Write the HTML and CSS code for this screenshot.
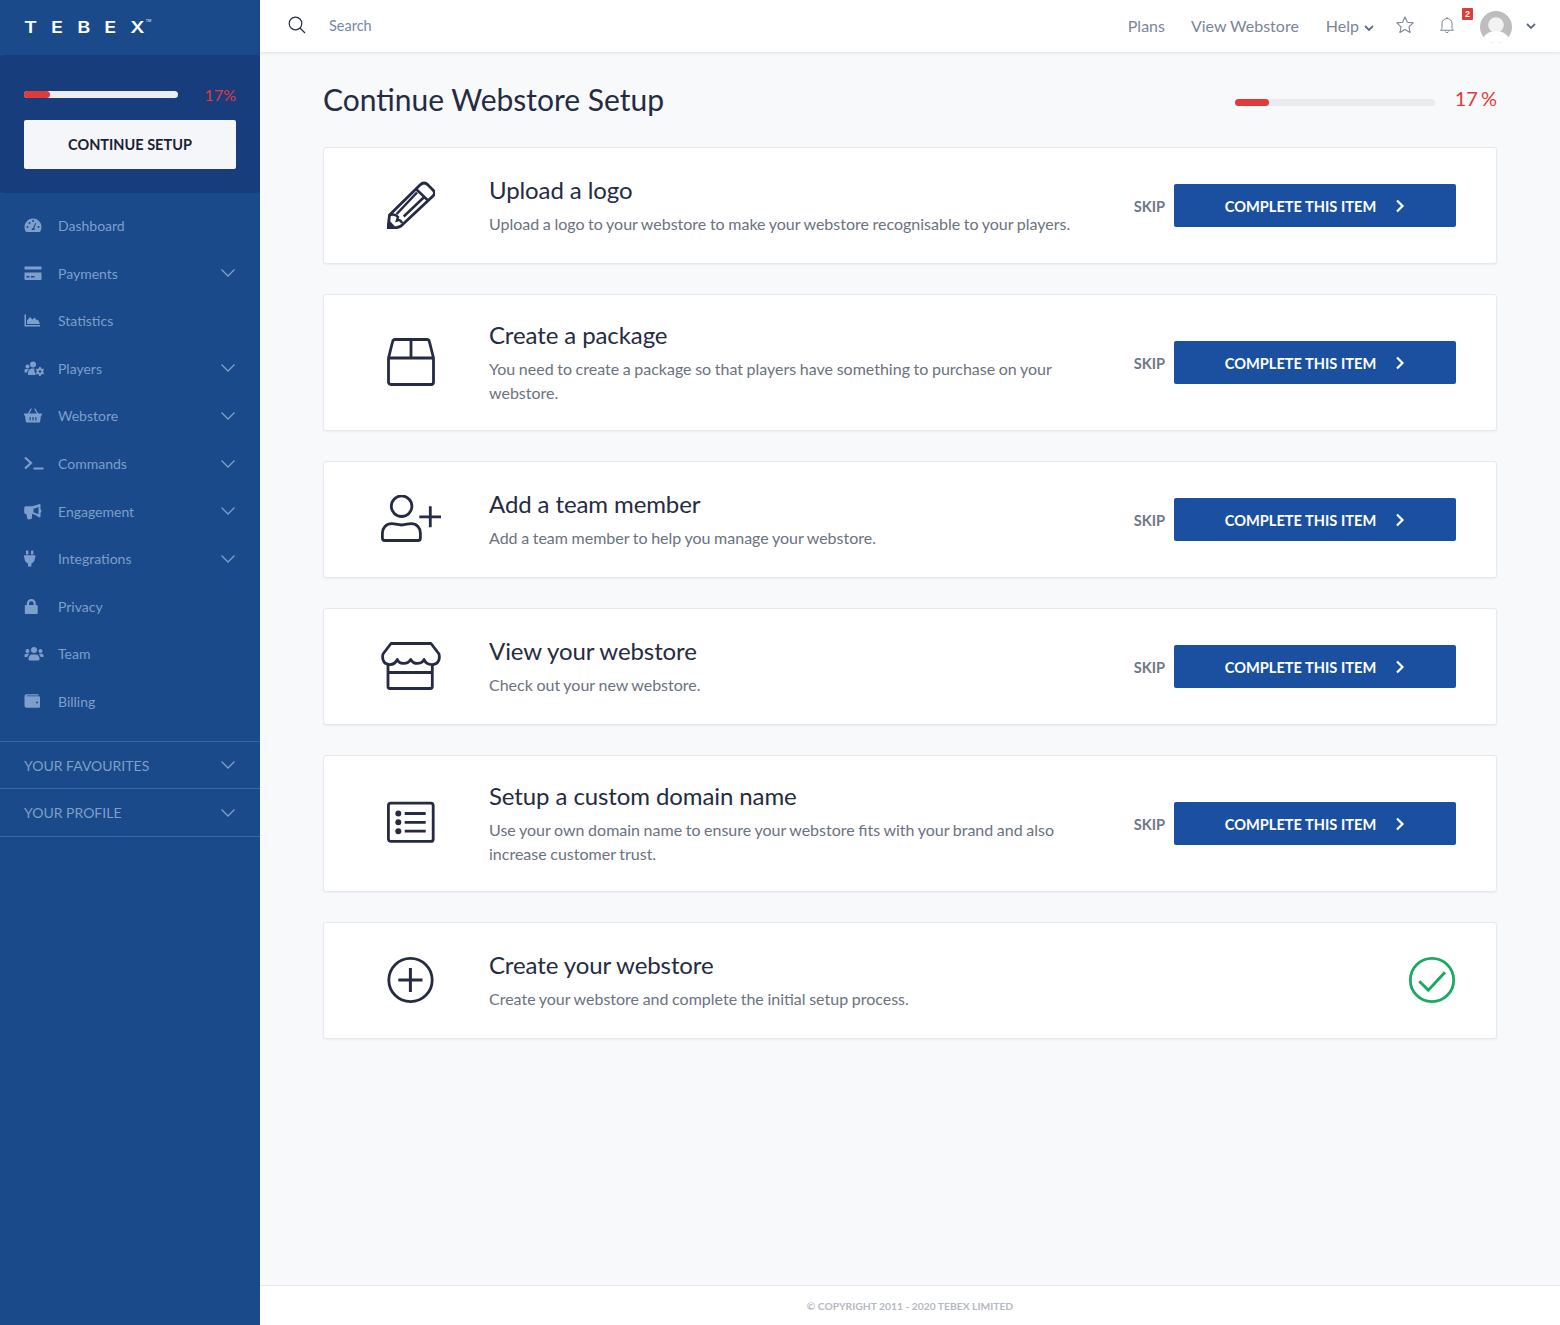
FILE: index.html
```html
<!DOCTYPE html>
<html lang="en">
<head>
    <meta charset="UTF-8">
    <title>Continue Webstore Setup</title>
    <link rel="stylesheet" href="styles.css">
</head>
<body>
    <svg class="sprites" width="0" height="0">
        <symbol id="chev" viewBox="0 0 16 10"><path d="M1.5 1.5 8 8l6.500-6.500" fill="none" stroke="currentColor" stroke-width="1.300"/></symbol>
        <symbol id="chev-small" viewBox="0 0 10 7"><path d="M1 1l4 4 4-4" fill="none" stroke="currentColor" stroke-width="1.800"/></symbol>
        <symbol id="chev-right" viewBox="0 0 10 14"><path d="M2 1.500 7.500 7 2 12.500" fill="none" stroke="currentColor" stroke-width="2.200"/></symbol>
    </svg>
    <aside class="sidebar">
        <div class="logo"><span class="logo-text">TEBE<span class="logo-end">X</span><sup>TM</sup></span></div>
        <div class="setup-box">
            <div class="setup-progress">
                <div class="side-bar-track"><div class="side-bar-fill"></div></div>
                <span class="side-percent">17%</span>
            </div>
            <a class="continue-btn">CONTINUE SETUP</a>
        </div>
        <nav class="side-nav">
            <a class="nav-item">
                <svg class="nav-icon" viewBox="0 0 18 16"><path fill-rule="evenodd" d="M9 1a8.500 8.500 0 0 0-8.500 8.500c0 1.700.4 3.200 1.200 4.500.2.300.5.500.9.500h12.800c.4 0 .7-.2.900-.5.800-1.300 1.200-2.800 1.200-4.500A8.500 8.500 0 0 0 9 1zM3.500 10.500a1 1 0 1 1 0-2 1 1 0 0 1 0 2zm2-4a1 1 0 1 1 0-2 1 1 0 0 1 0 2zM9 4.500a1 1 0 1 1 0-2 1 1 0 0 1 0 2zm1.500 8H7.700a1.700 1.700 0 0 1 1.500-2.100l2-5 1 .4-2 5c.5.400.7 1.100.3 1.700zm4-2a1 1 0 1 1 0-2 1 1 0 0 1 0 2z"/></svg>
                <span>Dashboard</span>
            </a>
            <a class="nav-item">
                <svg class="nav-icon" viewBox="0 0 18 16"><path fill-rule="evenodd" d="M1 1h16c.3 0 .5.200.5.500V4H.5V1.500C.5 1.200.7 1 1 1zM.5 7h17v7c0 .3-.2.500-.5.500H1c-.3 0-.5-.2-.5-.5V7zm2 3.500V12h3v-1.500h-3zm4.500 0V12h3.500v-1.500H7z"/></svg>
                <span>Payments</span>
                <svg class="nav-chev"><use href="#chev"/></svg>
            </a>
            <a class="nav-item">
                <svg class="nav-icon" viewBox="0 0 18 16"><path d="M.5 2H2v10.500h14V14H.5V2zM3 11.500V8l3-3.500L8.500 7l2-2 2.500 3 1-1 2 4.500H3z"/></svg>
                <span>Statistics</span>
            </a>
            <a class="nav-item">
                <svg class="nav-icon nav-icon-wide" viewBox="0 0 20 16"><circle cx="3.500" cy="6" r="2"/><circle cx="9" cy="4" r="3"/><path d="M.5 12V10c0-1 .8-1.500 1.500-1.500h2c.3 0 .6.100.9.300A4.500 4.500 0 0 0 3 12H.5zM4 14v-1.500C4 10 6 8 8 8h2.500c-.5 1.500 0 3.500 1 5 0 .5 0 1 .2 1.500H4.500c-.3 0-.5-.2-.5-.5z"/><path fill-rule="evenodd" d="M15.200 6.500l1.500.1.300 1.200 1.200.7 1.200-.4.700 1.300-.9.900v1.400l.9.900-.7 1.300-1.200-.4-1.200.7-.3 1.200h-1.500l-.3-1.200-1.200-.7-1.200.4-.7-1.300.9-.9V10.300l-.9-.9.700-1.300 1.200.4 1.200-.7.300-1.700zM16 9.700a1.300 1.300 0 1 0 0 2.600 1.300 1.300 0 0 0 0-2.600z"/></svg>
                <span>Players</span>
                <svg class="nav-chev"><use href="#chev"/></svg>
            </a>
            <a class="nav-item">
                <svg class="nav-icon" viewBox="0 0 18 16"><path fill-rule="evenodd" d="M6.800.8l1 .6L5.200 6h7.600L10.200 1.400l1-.6L14.200 6h3.300c.3 0 .5.200.5.500v1c0 .3-.2.500-.5.500H17l-.9 6.200c-.1.500-.5.800-1 .8H2.900c-.5 0-.9-.3-1-.8L1 8H.5C.2 8 0 7.800 0 7.500v-1C0 6.200.2 6 .5 6h3.300L6.800.8zM5.500 9.500v3.500h1.200V9.500H5.500zm2.900 0v3.500h1.200V9.500H8.400zm2.900 0v3.500h1.200V9.500h-1.200z"/></svg>
                <span>Webstore</span>
                <svg class="nav-chev"><use href="#chev"/></svg>
            </a>
            <a class="nav-item">
                <svg class="nav-icon nav-icon-wide" viewBox="0 0 20 16"><path d="M1 2l6 5.500L1 13" fill="none" stroke="currentColor" stroke-width="2.200"/><rect x="9.500" y="12" width="10" height="2"/></svg>
                <span>Commands</span>
                <svg class="nav-chev"><use href="#chev"/></svg>
            </a>
            <a class="nav-item">
                <svg class="nav-icon" viewBox="0 0 18 16"><path fill-rule="evenodd" d="M15.500.5c.6 0 1 .5 1 1v4.300c.6.300 1 .9 1 1.700s-.4 1.400-1 1.700V13c0 .6-.5 1-1 1-.3 0-.5-.1-.7-.2-1.800-1.500-4-3-6.800-3.300v3.700c0 .5-.2 1-.7 1.200l-2.800.6c-.6.100-1-.3-1.200-.7l-1-4.800H2c-1 0-1.800-.8-1.800-1.800V4.500c0-1 .8-1.800 1.800-1.800h6C10.800 2.500 13 1.400 14.800.8c.2-.2.400-.3.700-.3zM14.500 3.200c-1.400 1-3.300 1.700-5 1.900v3.800c1.700.2 3.600 1 5 1.900V3.200z"/></svg>
                <span>Engagement</span>
                <svg class="nav-chev"><use href="#chev"/></svg>
            </a>
            <a class="nav-item">
                <svg class="nav-icon" viewBox="0 0 18 16"><path d="M2.500 0h1.400c.3 0 .5.200.5.500V4H2V.5c0-.3.200-.5.500-.5zm5 0h1.400c.3 0 .5.200.5.500V4H7V.5c0-.3.200-.5.500-.5zM.5 4.800h10.400c.3 0 .5.200.5.500v1.500c0 .3-.2.500-.5.500v.7c0 2.500-1.800 4.500-3.500 4.900V16H4v-3.100C2.300 12.500.5 10.500.5 8v-.7c-.3 0-.5-.2-.5-.5V5.300c0-.3.200-.5.500-.5z"/></svg>
                <span>Integrations</span>
                <svg class="nav-chev"><use href="#chev"/></svg>
            </a>
            <a class="nav-item">
                <svg class="nav-icon" viewBox="0 0 18 16"><path fill-rule="evenodd" d="M2.800 6.500V5A4.500 4.500 0 0 1 11.800 5v1.500h.7c.7 0 1.200.6 1.200 1.300v6.400c0 .7-.5 1.300-1.200 1.300H2c-.7 0-1.200-.6-1.200-1.300V7.800c0-.7.500-1.300 1.200-1.300h.8zm2.200 0h4.600V5a2.300 2.300 0 0 0-4.600 0v1.500z"/></svg>
                <span>Privacy</span>
            </a>
            <a class="nav-item">
                <svg class="nav-icon nav-icon-wide" viewBox="0 0 20 16"><circle cx="3.500" cy="5.500" r="2"/><circle cx="16.500" cy="5.500" r="2"/><circle cx="10" cy="4.500" r="3"/><path d="M.5 11.500V10c0-1 .8-1.800 1.800-1.800h2c.4 0 .8.100 1.100.4-1.100.7-1.800 1.700-2 3H1.500c-.6 0-1-.1-1-.1zM19.500 11.500V10c0-1-.8-1.800-1.800-1.800h-2c-.4 0-.8.100-1.100.4 1.100.7 1.800 1.700 2 3h1.900c.6 0 1-.1 1-.1zM4.500 13.200c0-2.100 1.600-4.200 3.500-4.200h4c1.900 0 3.500 2.100 3.500 4.200v.6c0 .6-.5 1.200-1 1.200h-9c-.5 0-1-.6-1-1.200v-.6z"/></svg>
                <span>Team</span>
            </a>
            <a class="nav-item">
                <svg class="nav-icon" viewBox="0 0 18 16"><path fill-rule="evenodd" d="M2.500.8h11c.7 0 1.200.5 1.200 1.200H3c-.4 0-.4.700 0 .7h11.800c.8 0 1.200.5 1.200 1.200v9c0 .7-.5 1.300-1.200 1.300H2.500C1.400 14.200.5 13.400.5 12.300V2.800C.5 1.700 1.400.8 2.500.8zM13 8a1 1 0 1 0 0 2 1 1 0 0 0 0-2z"/></svg>
                <span>Billing</span>
            </a>
        </nav>
        <div class="side-groups">
            <a class="side-group"><span>YOUR FAVOURITES</span><svg class="nav-chev"><use href="#chev"/></svg></a>
            <a class="side-group"><span>YOUR PROFILE</span><svg class="nav-chev"><use href="#chev"/></svg></a>
        </div>
    </aside>

    <div class="main">
        <header class="topbar">
            <svg class="search-icon" viewBox="0 0 18 18"><circle cx="7.500" cy="7.500" r="6.300" fill="none" stroke="currentColor" stroke-width="1.200"/><path d="M12 12l5 5" stroke="currentColor" stroke-width="1.300"/></svg>
            <span class="search-text">Search</span>
            <div class="top-links">
                <a class="top-link">Plans</a>
                <a class="top-link">View Webstore</a>
                <a class="top-link">Help<svg class="small-chev"><use href="#chev-small"/></svg></a>
                <svg class="star-icon" viewBox="0 0 20 20"><path d="M10 2l2.400 5.300 5.800.6-4.300 3.900 1.200 5.700L10 14.600l-5.100 2.900 1.200-5.700L1.800 7.900l5.800-.6z" fill="none" stroke="currentColor" stroke-width="1.100" stroke-linejoin="round"/></svg>
                <span class="bell-wrap">
                    <svg class="bell-icon" viewBox="0 0 16 18"><path d="M3 12.500V7.500a5 5 0 0 1 10 0v5l1.500 1.800h-13zM6.500 15.500c.2 1.500 2.800 1.500 3 0M8 1v1.500" fill="none" stroke="currentColor" stroke-width="1"/></svg>
                    <span class="bell-badge">2</span>
                </span>
                <span class="avatar">
                    <svg viewBox="0 0 32 32"><circle cx="16" cy="16" r="16" fill="#bdbdbd"/><circle cx="16" cy="14" r="7.800" fill="#f2f2f2"/><path d="M3.500 26c3-4 7.500-6 12.500-6s9.500 2 12.500 6a16 16 0 0 1-25 0z" fill="#fff"/></svg>
                </span>
                <svg class="small-chev avatar-chev"><use href="#chev-small"/></svg>
            </div>
        </header>

        <main class="content">
            <div class="page-head">
                <h1>Continue Webstore Setup</h1>
                <div class="page-progress">
                    <div class="page-track"><div class="page-fill"></div></div>
                    <span class="page-percent">17 %</span>
                </div>
            </div>

            <section class="card">
                <svg class="card-icon" viewBox="0 0 48 48"><path d="M1 47 2.500 34 33 4c2.800-2.700 5.500-2.700 8 0l4.500 4.500c2.500 2.500 2.500 4.500.5 6.500L14 45c-1.200.8-2.500 1.300-4 1.500z" fill="none" stroke="#252b42" stroke-width="2.800" stroke-linejoin="round"/><path d="M28.500 7.500 41 19.500M9.700 33 30 11.500M16.700 35.500 36.700 16.500M3 34c3-1 6-.5 8 2l-1 3.500c2-.8 4-.5 5 2.500" fill="none" stroke="#252b42" stroke-width="2.500"/><path d="M1 47l1-8 6 6.500z" fill="#252b42"/></svg>
                <div class="card-body">
                    <h2>Upload a logo</h2>
                    <p>Upload a logo to your webstore to make your webstore recognisable to your players.</p>
                </div>
                <div class="card-actions">
                    <a class="skip">SKIP</a>
                    <a class="complete-btn">COMPLETE THIS ITEM<svg><use href="#chev-right"/></svg></a>
                </div>
            </section>

            <section class="card">
                <svg class="card-icon" viewBox="0 0 48 48"><path d="M1.500 20 5.500 4C5.800 2.500 7 1.500 8 1.500h32c1 0 2.200 1 2.500 2.500l4 16v24c0 1.500-1 2.500-2.500 2.500H4c-1.500 0-2.500-1-2.500-2.500zM1.500 20h45M24 1.500V20" fill="none" stroke="#252b42" stroke-width="2.800" stroke-linejoin="round"/></svg>
                <div class="card-body">
                    <h2>Create a package</h2>
                    <p>You need to create a package so that players have something to purchase on your webstore.</p>
                </div>
                <div class="card-actions">
                    <a class="skip">SKIP</a>
                    <a class="complete-btn">COMPLETE THIS ITEM<svg><use href="#chev-right"/></svg></a>
                </div>
            </section>

            <section class="card">
                <svg class="card-icon card-icon-over" viewBox="0 0 60 48"><circle cx="20.600" cy="11.200" r="10.300" fill="none" stroke="#252b42" stroke-width="2.800"/><path d="M11 28.600C5 28.600 1.400 33 1.400 38v5c0 1.500 1 2.500 2.500 2.500h33c1.500 0 2.500-1 2.500-2.500v-5c0-5-3.400-9.400-9.400-9.400-3 0-5.500 1.400-9.500 1.400S14 28.600 11 28.600zM38.300 21.800H60M49.300 11.200v21" fill="none" stroke="#252b42" stroke-width="2.800"/></svg>
                <div class="card-body">
                    <h2>Add a team member</h2>
                    <p>Add a team member to help you manage your webstore.</p>
                </div>
                <div class="card-actions">
                    <a class="skip">SKIP</a>
                    <a class="complete-btn">COMPLETE THIS ITEM<svg><use href="#chev-right"/></svg></a>
                </div>
            </section>

            <section class="card">
                <svg class="card-icon card-icon-over" viewBox="0 0 60 48"><path d="M10 1.500h40L58 12c1 4 0 10-5.500 10.500-4.500.5-8-1.500-9.500-5-2 4.500-10 6-13.300 0-3.700 6-11.700 4.500-13.400 0-1.800 3.500-5.300 5.500-8.800 5C2 22 1 16 2 12zM7 23v21.500c0 1.200.8 2 2 2h40.300c1.200 0 2-.8 2-2V23M7 30.500h44.300" fill="none" stroke="#252b42" stroke-width="2.800" stroke-linejoin="round"/></svg>
                <div class="card-body">
                    <h2>View your webstore</h2>
                    <p>Check out your new webstore.</p>
                </div>
                <div class="card-actions">
                    <a class="skip">SKIP</a>
                    <a class="complete-btn">COMPLETE THIS ITEM<svg><use href="#chev-right"/></svg></a>
                </div>
            </section>

            <section class="card">
                <svg class="card-icon" viewBox="0 0 48 48"><rect x="1.400" y="4.200" width="44.800" height="38.200" rx="2.500" fill="none" stroke="#252b42" stroke-width="2.800"/><circle cx="11.300" cy="14.500" r="3" fill="#252b42"/><circle cx="11.300" cy="23.300" r="3" fill="#252b42"/><circle cx="11.300" cy="32.200" r="3" fill="#252b42"/><path d="M17.700 14.500h21M17.700 23.300h21M17.700 32.200h21" stroke="#252b42" stroke-width="2.800"/></svg>
                <div class="card-body">
                    <h2>Setup a custom domain name</h2>
                    <p>Use your own domain name to ensure your webstore fits with your brand and also increase customer trust.</p>
                </div>
                <div class="card-actions">
                    <a class="skip">SKIP</a>
                    <a class="complete-btn">COMPLETE THIS ITEM<svg><use href="#chev-right"/></svg></a>
                </div>
            </section>

            <section class="card">
                <svg class="card-icon" viewBox="0 0 48 48"><circle cx="23.500" cy="24" r="21.700" fill="none" stroke="#252b42" stroke-width="2.800"/><path d="M11.300 24h24.200M23.400 12v24" stroke="#252b42" stroke-width="3"/></svg>
                <div class="card-body">
                    <h2>Create your webstore</h2>
                    <p>Create your webstore and complete the initial setup process.</p>
                </div>
                <svg class="done-icon" viewBox="0 0 48 48"><circle cx="24" cy="24" r="21.700" fill="none" stroke="#18ab5f" stroke-width="2.800"/><path d="M11.300 25.200 20.300 34.200 37 16.200" fill="none" stroke="#18ab5f" stroke-width="3"/></svg>
            </section>
        </main>

        <footer class="footer">© COPYRIGHT 2011 - 2020 TEBEX LIMITED</footer>
    </div>
</body>
</html>
```

FILE: styles.css
```css
* {
    box-sizing: border-box;
}
html, body {
    height: 100%;
}
body {
    margin: 0;
    display: flex;
    min-height: 1325px;
    font-family: Lato, "Open Sans", sans-serif;
    background-color: #f8f9fb;
    color: #252b42;
    overflow: hidden;
}
.sprites {
    position: absolute;
}

/* sidebar */
.sidebar {
    width: 260px;
    flex-shrink: 0;
    background-color: #1a4a8a;
    color: #7e9fcb;
}
.logo {
    height: 55px;
    padding: 17px 0 0 24px;
}
.logo-text {
    display: inline-block;
    font-family: Inter, sans-serif;
    font-size: 16.500px;
    line-height: 20px;
    font-weight: 600;
    letter-spacing: 11.700px;
    color: #fff;
    white-space: nowrap;
    transform: scaleX(1.2);
    transform-origin: left center;
}
.logo-end {
    letter-spacing: 0;
}
.logo sup {
    font-size: 3px;
    letter-spacing: 0;
    margin-left: 1px;
    vertical-align: 11px;
    line-height: 0;
    font-weight: 400;
}
.setup-box {
    height: 138px;
    padding: 30px 24px 0;
    background-color: #173d7d;
    border-radius: 4px;
}
.setup-progress {
    display: flex;
    justify-content: space-between;
    height: 35px;
}
.side-bar-track {
    width: 154px;
    height: 7px;
    margin-top: 6px;
    background-color: #eceef1;
    border-radius: 4px;
}
.side-bar-fill {
    width: 26px;
    height: 7px;
    background-color: #e03a3a;
    border-radius: 4px;
}
.side-percent {
    font-size: 16px;
    line-height: 20px;
    color: #e03a3a;
}
.continue-btn {
    display: block;
    height: 49px;
    background-color: #f5f6fa;
    border-radius: 2px;
    font-size: 14.500px;
    font-weight: 700;
    line-height: 49px;
    text-align: center;
    color: #1a2233;
}
.side-nav {
    padding-top: 8.800px;
    margin-bottom: 15.200px;
}
.nav-item {
    display: flex;
    align-items: center;
    height: 47.600px;
    padding: 0 24px;
    font-size: 14px;
}
.nav-icon {
    width: 18px;
    height: 17px;
    margin-right: 16px;
    flex-shrink: 0;
    fill: #7e9fcb;
    color: #7e9fcb;
}
.nav-icon-wide {
    width: 20px;
    margin-right: 14px;
}
.nav-chev {
    width: 16px;
    height: 10px;
    margin-left: auto;
    color: #7e9fcb;
}
.side-groups {
    border-top: 1px solid #3d659c;
}
.side-group {
    display: flex;
    align-items: center;
    height: 47.500px;
    padding: 1px 24px 0;
    border-bottom: 1px solid #3d659c;
    font-size: 14px;
}

/* main column */
.main {
    flex: 1;
    display: flex;
    flex-direction: column;
    min-width: 0;
}
.topbar {
    display: flex;
    align-items: center;
    height: 52px;
    padding: 0 24px 0 28px;
    background-color: #fff;
    box-shadow: 0 1px 3px rgba(40, 50, 70, 0.12);
    flex-shrink: 0;
}
.search-icon {
    width: 18px;
    height: 18px;
    margin-bottom: 2px;
    color: #252b42;
}
.search-text {
    margin: 0 0 2px 23px;
    font-size: 14.500px;
    color: #7487ac;
}
.top-links {
    display: flex;
    align-items: center;
    margin-left: auto;
    color: #7a8596;
}
.top-link {
    margin: 0 26px 2px 0;
    font-size: 16px;
}
.top-link:nth-child(2) {
    margin-right: 27px;
}
.top-link:nth-child(3) {
    margin-right: 21px;
}
.small-chev {
    width: 10px;
    height: 7px;
    margin-left: 5px;
    color: #5f6c80;
}
.star-icon {
    width: 20px;
    height: 20px;
    margin: 0 24px 2px 0;
}
.bell-wrap {
    position: relative;
    width: 16px;
    height: 18px;
    margin: 0 25px 2px 0;
}
.bell-icon {
    display: block;
    width: 16px;
    height: 18px;
}
.bell-badge {
    position: absolute;
    top: -8px;
    left: 23px;
    width: 11px;
    height: 12px;
    border-radius: 1px;
    background-color: #e03a3a;
    font-family: "Liberation Sans", sans-serif;
    font-size: 9px;
    font-weight: 700;
    line-height: 12px;
    text-align: center;
    color: #fff;
}
.avatar {
    width: 32px;
    height: 32px;
    margin-top: 1px;
}
.avatar svg {
    display: block;
    width: 32px;
    height: 32px;
}
.avatar-chev {
    margin-left: 14px;
}

.content {
    flex: 1;
    padding: 0 63px;
}
.page-head {
    display: flex;
    align-items: center;
    justify-content: space-between;
    height: 95px;
    padding-bottom: 2px;
}
h1 {
    margin: 0;
    font-size: 30px;
    font-weight: 400;
    color: #252b42;
}
.page-progress {
    display: flex;
    align-items: center;
}
.page-track {
    width: 200px;
    height: 7px;
    margin-top: 8px;
    background-color: #e9ecef;
    border-radius: 4px;
}
.page-fill {
    width: 34px;
    height: 7px;
    background-color: #e03a3a;
    border-radius: 4px;
}
.page-percent {
    margin: 0 0 2px 20px;
    font-size: 20px;
    word-spacing: -2px;
    color: #e03a3a;
}
.card {
    display: flex;
    align-items: center;
    min-height: 117px;
    margin-bottom: 30px;
    padding: 0 40px 0 63px;
    background-color: #fff;
    border: 1px solid #e6e9ee;
    border-radius: 3px;
    box-shadow: 0 1px 2px rgba(40, 50, 70, 0.06);
}
.card-icon {
    width: 48px;
    height: 48px;
    margin-bottom: 2px;
    flex-shrink: 0;
}
.card-icon-over {
    width: 60px;
    margin: 0 -6px 2px;
}
.card-body {
    flex: 1;
    min-width: 0;
    padding: 24px 0 25px 54px;
}
h2 {
    margin: 0 0 6px;
    font-size: 24px;
    line-height: 32px;
    font-weight: 400;
    letter-spacing: -0.1px;
    color: #252b42;
}
.card p {
    margin: 0;
    max-width: 590px;
    font-size: 16px;
    line-height: 24px;
    word-spacing: -0.5px;
    color: #6b7280;
}
.card-actions {
    display: flex;
    align-items: center;
    flex-shrink: 0;
    margin-left: 40px;
}
.skip {
    margin-right: 9px;
    padding-top: 1px;
    font-size: 14.600px;
    font-weight: 700;
    color: #6f7786;
}
.complete-btn {
    display: flex;
    align-items: center;
    justify-content: center;
    width: 282px;
    height: 43px;
    padding-top: 1px;
    background-color: #1b4f9f;
    border-radius: 2px;
    font-size: 14.600px;
    font-weight: 700;
    color: #fff;
}
.complete-btn svg {
    width: 10px;
    height: 14px;
    margin-left: 19px;
}
.done-icon {
    width: 48px;
    height: 48px;
    margin-bottom: 2px;
    flex-shrink: 0;
}
.footer {
    height: 40px;
    padding-top: 13px;
    background-color: #fff;
    border-top: 1px solid #e6e9ee;
    font-size: 10.300px;
    line-height: 14px;
    font-weight: 700;
    text-align: center;
    color: #b5b9c1;
    flex-shrink: 0;
}
```
